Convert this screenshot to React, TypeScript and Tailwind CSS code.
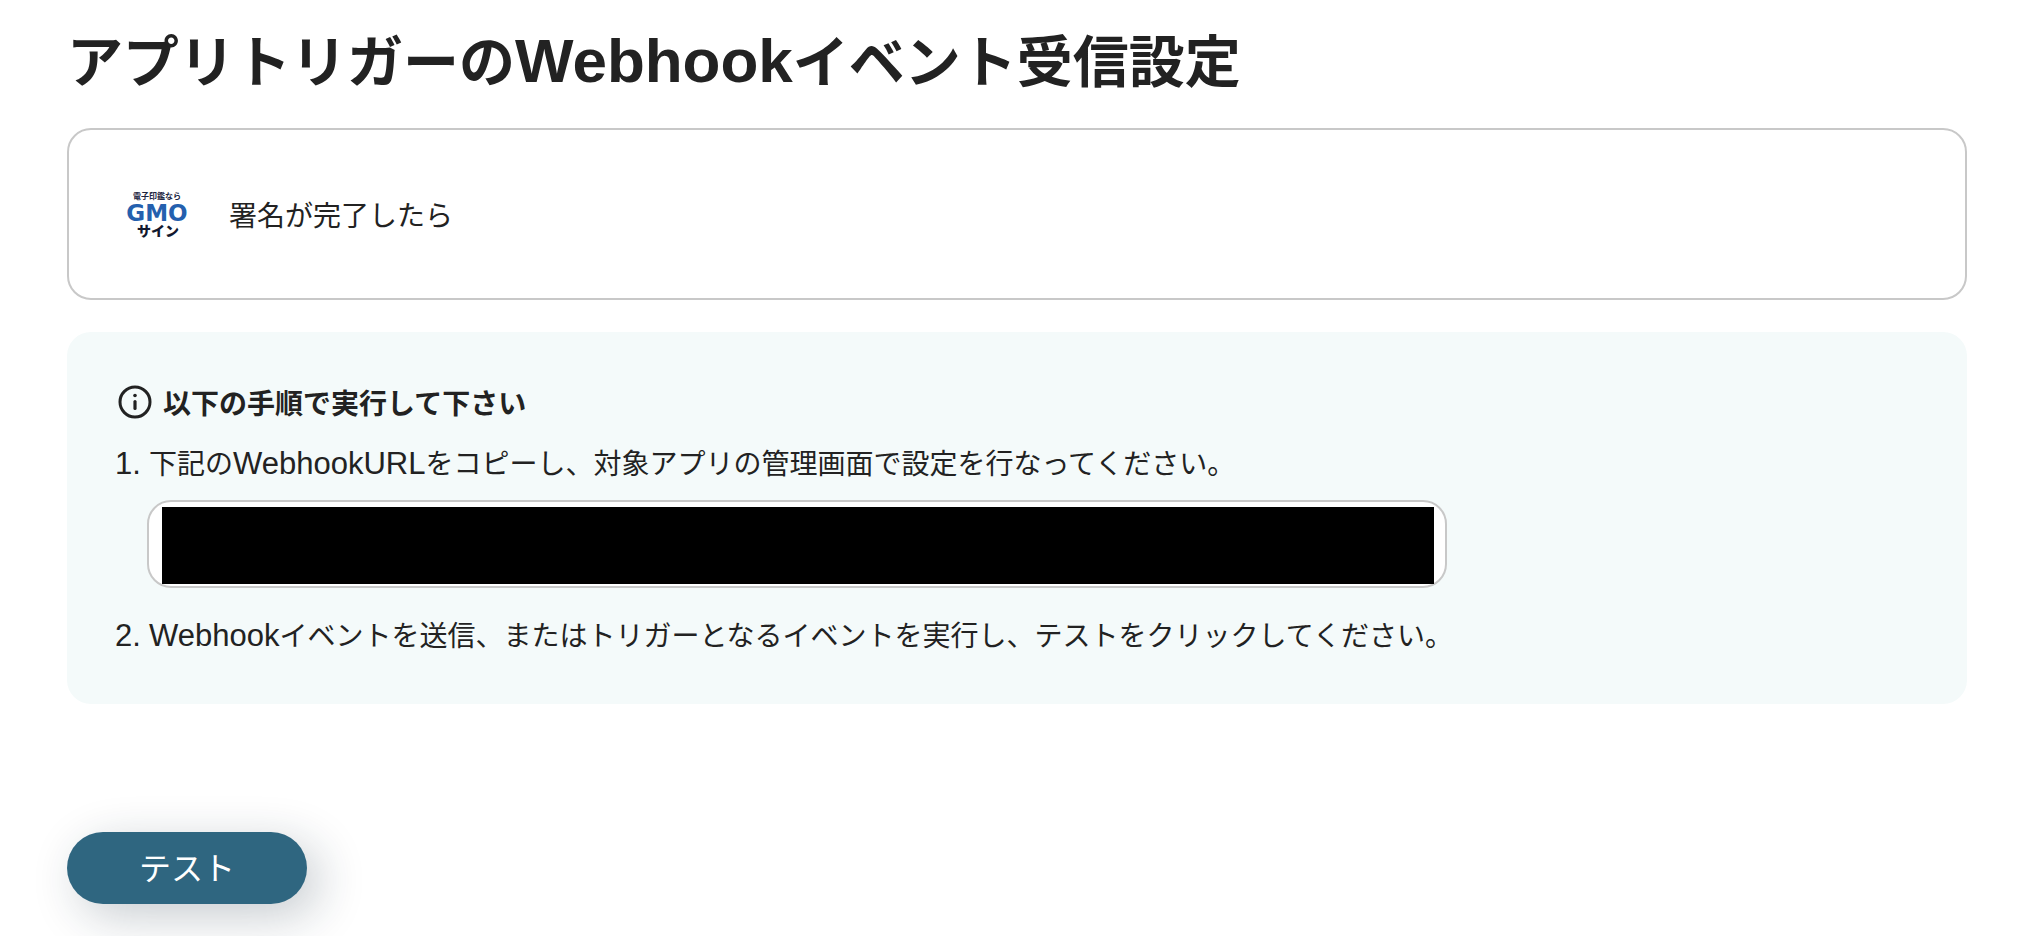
import React, { type JSX } from "react";

const WEBHOOK_URL = "";

function GmoSignLogo(): JSX.Element {
  return (
    <svg viewBox="0 0 80 80" className="size-20 shrink-0" role="img" aria-label="GMOサイン">
      <g textAnchor="middle" className="font-['Noto_Sans_CJK_JP',sans-serif] font-bold">
        <text x="40" y="25" fontSize="8" fill="#1b2340">
          電子印鑑なら
        </text>
        <text
          x="40"
          y="47"
          fontSize="23"
          fill="#2460ae"
          className="font-['DejaVu_Sans',sans-serif]"
        >
          GMO
        </text>
        <text x="41" y="62" fontSize="14" fill="#12182e" className="font-black">
          サイン
        </text>
      </g>
    </svg>
  );
}

function InfoIcon(): JSX.Element {
  return (
    <svg viewBox="0 0 36 36" className="size-9 shrink-0" fill="none" aria-hidden="true">
      <circle cx="18" cy="18" r="15" stroke="#222" strokeWidth="3" />
      <circle cx="18" cy="11.5" r="1.8" fill="#222" />
      <path d="M18 17.5v7" stroke="#222" strokeWidth="3.2" strokeLinecap="round" />
    </svg>
  );
}

// 欧文は和文より一回り大きくして高さをそろえる
function Latin({ children }: { children: React.ReactNode }): JSX.Element {
  return (
    <span className="font-['Liberation_Sans',sans-serif] text-[31px] leading-none">
      {children}
    </span>
  );
}

export default function App(): JSX.Element {
  return (
    <main className="bg-white pb-8 pl-[67px] pr-[73px] pt-[22px] font-['Noto_Sans_CJK_JP',sans-serif] text-[28px] leading-10 text-[#222]">
      <h1 className="text-[56px] font-bold leading-[72px]">
        アプリトリガーの
        <span className="font-['Liberation_Sans',sans-serif] text-[62px] leading-none">
          Webhook
        </span>
        イベント受信設定
      </h1>

      <section className="mt-[34px] flex items-center gap-8 rounded-3xl border-2 border-[#c8c8c8] px-12 py-11">
        <GmoSignLogo />
        <p>署名が完了したら</p>
      </section>

      <section className="mt-8 rounded-3xl bg-[#f4fafa] px-12 py-[50px]">
        <h2 className="flex items-center gap-2.5 pl-0.5 font-bold">
          <InfoIcon />
          <label htmlFor="webhook-url">以下の手順で実行して下さい</label>
        </h2>

        <ol className="mt-5">
          <li className="flex">
            <span className="w-[34px] shrink-0">
              <Latin>1.</Latin>
            </span>
            <p>
              下記の<Latin>WebhookURL</Latin>
              をコピーし、対象アプリの管理画面で設定を行なってください。
            </p>
          </li>
          <li className="ml-8 mt-[18px] block max-w-[1300px] rounded-3xl border-2 border-[#c8c8c8] bg-white pb-0.5 pl-[13px] pr-[11px] pt-[5px]">
            <input
              id="webhook-url"
              type="text"
              readOnly
              value={WEBHOOK_URL}
              className="block h-[77px] w-full bg-black text-black outline-none"
            />
          </li>
          <li className="mt-[26px] flex">
            <span className="w-[34px] shrink-0">
              <Latin>2.</Latin>
            </span>
            <p>
              <Latin>Webhook</Latin>
              イベントを送信、またはトリガーとなるイベントを実行し、テストをクリックしてください。
            </p>
          </li>
        </ol>
      </section>

      <button
        type="button"
        className="mt-32 block h-[72px] w-60 rounded-full bg-[#2f6680] pb-1 text-[32px] text-white shadow-[12px_12px_48px_rgba(20,40,60,0.24)]"
      >
        テスト
      </button>
    </main>
  );
}
